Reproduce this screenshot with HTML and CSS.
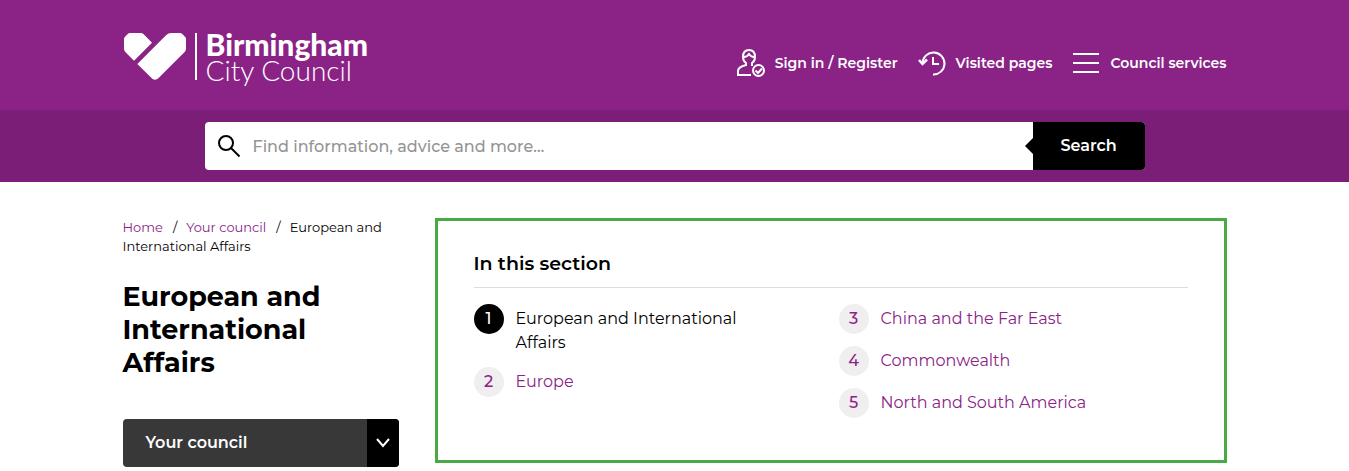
FILE: index.html
```html
<!DOCTYPE html>
<html lang="en">
<head>
	<meta charset="utf-8">
	<meta name="viewport" content="width=device-width, initial-scale=1">
	<title>European and International Affairs | Birmingham City Council</title>
	<link rel="stylesheet" href="styles.css">
</head>
<body>
	<header class="header">
		<div class="container header-inner">
			<a href="/" class="logo">
				<svg class="logo-heart" viewBox="0 0 186 141" width="62" height="47" aria-hidden="true">
					<path d="M18 0H50Q55 0 59 4L84 29L30 83L4 57Q0 53 0 47V18Q0 14 3 11L11 3Q14 0 18 0Z"/>
					<path d="M40 93L126 7Q133 0 142 0H168Q172 0 175 3L183 11Q186 14 186 18V47Q186 53 182 57L103 136Q94 144 85 137Z"/>
				</svg>
				<span class="logo-text"><strong>Birmingham</strong><span>City Council</span></span>
			</a>
			<nav class="tools">
				<a href="/account">
					<svg viewBox="0 0 28 28" width="28" height="28" aria-hidden="true">
						<path d="M6 8Q6 1 12 1T18 8Q18 12 15 14V17M9 17V14Q6 12 6 8M7 8Q10 8 12 5Q14 8 17 8M9 16Q1 18 1 22V26H14"/>
						<circle cx="21.500" cy="21.500" r="5.500"/>
						<path d="M18.500 21.500L21 24L25 19.500"/>
					</svg>
					Sign in / Register
				</a>
				<a href="/visited">
					<svg viewBox="0 0 28 28" width="28" height="28" aria-hidden="true">
						<path d="M4.500 14A11 11 0 1 1 15 25.500M15 8V15H21"/>
						<path d="M1 11L4.500 15L9 10.500" stroke-width="2.500"/>
					</svg>
					Visited pages
				</a>
				<a href="/services">
					<svg viewBox="0 0 28 28" width="28" height="28" aria-hidden="true">
						<path d="M1 5H27M1 14H27M1 23H27" stroke-width="2"/>
					</svg>
					Council services
				</a>
			</nav>
		</div>
	</header>
	<div class="searchbar">
		<form class="search" action="/search" role="search">
			<label for="q" aria-label="Search this site">
				<svg viewBox="0 0 24 24" width="24" height="24" aria-hidden="true">
					<circle cx="9" cy="9" r="7"/>
					<path d="M14 14L22.500 22.500"/>
				</svg>
			</label>
			<input type="search" id="q" name="q" placeholder="Find information, advice and more…">
			<button type="submit">Search</button>
		</form>
	</div>

	<main class="container content">
		<div class="side">
			<nav class="breadcrumb" aria-label="Breadcrumb">
				<a href="/">Home</a><span class="sep">/</span><a href="/council">Your council</a><span class="sep">/</span><span>European and International Affairs</span>
			</nav>
			<h1>European and International Affairs</h1>
			<button type="button" class="menu">
				<span class="menu-label">Your council</span>
				<span class="menu-arrow">
					<svg viewBox="0 0 14 10" width="14" height="10" aria-hidden="true"><path d="M1 1L7 8L13 1"/></svg>
				</span>
			</button>
		</div>
		<section class="panel">
			<h2>In this section</h2>
			<ol>
				<li class="current"><span class="num">1</span><span class="name">European and International Affairs</span></li>
				<li><span class="num">2</span><a class="name" href="/europe">Europe</a></li>
				<li><span class="num">3</span><a class="name" href="/china">China and the Far East</a></li>
				<li><span class="num">4</span><a class="name" href="/commonwealth">Commonwealth</a></li>
				<li><span class="num">5</span><a class="name" href="/america">North and South America</a></li>
			</ol>
		</section>
	</main>
</body>
</html>
```
FILE: styles.css
```css
* {
	box-sizing: border-box;
}
body {
	margin: 0;
	background-color: #fff;
	color: #000;
	font-family: Montserrat, Inter, "Liberation Sans", sans-serif;
	font-size: 16px;
	line-height: 24px;
}
a {
	color: #8b2387;
	text-decoration: none;
}
a:hover {
	text-decoration: underline;
}
svg {
	fill: none;
	stroke: currentColor;
	stroke-width: 2;
	flex: none;
}
.container {
	max-width: 1152px;
	margin: 0 auto;
	padding: 0 24px;
}

/* header */
.header {
	background-color: #8b2387;
	color: #fff;
}
.header a {
	color: #fff;
}
.header-inner {
	display: flex;
	justify-content: space-between;
	align-items: flex-start;
	min-height: 110px;
	padding-top: 33px;
}
.logo {
	display: flex;
	gap: 9px;
	padding-left: 1px;
}
.logo-heart {
	fill: #fff;
	stroke: none;
}
.logo-text {
	display: flex;
	flex-direction: column;
	justify-content: center;
	height: 47px;
	padding-left: 9px;
	border-left: 2px solid #fff;
	font-family: Lato, sans-serif;
	font-size: 28px;
	line-height: 26px;
	font-weight: 300;
}
.logo-text strong {
	font-size: 30px;
	font-weight: 900;
}
.tools {
	display: flex;
	gap: 20px;
	padding-top: 16px;
	font-size: 14px;
	font-weight: 600;
}
.tools a {
	display: flex;
	align-items: center;
	gap: 10px;
	line-height: 28px;
}

/* search */
.searchbar {
	padding: 12px 24px;
	background-color: #7b1e77;
}
.search {
	display: flex;
	align-items: center;
	max-width: 940px;
	height: 48px;
	margin: 0 auto;
	background-color: #fff;
	border-radius: 4px;
}
.search label {
	display: flex;
	padding: 0 12px;
}
.search input {
	flex: 1;
	min-width: 0;
	height: 48px;
	padding: 0;
	border: 0;
	outline: 0;
	background: none;
	font: inherit;
	font-weight: 500;
}
.search input::placeholder {
	color: #949494;
	opacity: 1;
}
.search button {
	position: relative;
	width: 112px;
	height: 48px;
	border: 0;
	border-radius: 0 4px 4px 0;
	background-color: #000;
	color: #fff;
	font: inherit;
	font-weight: 600;
}
.search button::before {
	content: "";
	position: absolute;
	left: -8px;
	top: 16px;
	border: 8px solid transparent;
	border-left: 0;
	border-right-color: #000;
}

/* content */
.content {
	display: grid;
	grid-template-columns: 1fr 792px;
	gap: 36px;
	align-items: start;
	padding-top: 36px;
}
.breadcrumb {
	font-size: 13px;
	line-height: 19px;
}
.sep {
	margin: 0 9px 0 10px;
}
h1 {
	margin: 24px 0 40px;
	font-size: 27px;
	line-height: 33px;
	font-weight: 700;
}
.menu {
	display: flex;
	width: 100%;
	height: 48px;
	padding: 0;
	border: 0;
	border-radius: 4px;
	overflow: hidden;
	background-color: #383838;
	color: #fff;
	font: inherit;
	font-weight: 600;
	line-height: 48px;
	text-align: left;
}
.menu-label {
	flex: 1;
	padding-left: 23px;
}
.menu-arrow {
	display: flex;
	align-items: center;
	justify-content: center;
	width: 32px;
	background-color: #000;
}
.panel {
	padding: 31px 36px 30px;
	border: 3px solid #49a942;
}
h2 {
	margin: 0 0 16px;
	padding-bottom: 11px;
	border-bottom: 1px solid #ddd;
	font-size: 19px;
	line-height: 24px;
	font-weight: 600;
}
ol {
	columns: 2;
	column-gap: 16px;
	margin: 0;
	padding: 0;
	list-style: none;
}
li {
	display: flex;
	gap: 12px;
	min-height: 42px;
	padding: 0 60px 12px 0;
	break-inside: avoid;
}
.num {
	flex: none;
	width: 30px;
	height: 30px;
	border-radius: 50%;
	background-color: #f0eeef;
	color: #8b2387;
	font-weight: 500;
	line-height: 30px;
	text-align: center;
}
.current .num {
	background-color: #000;
	color: #fff;
}
.name {
	padding-top: 3px;
}
```
